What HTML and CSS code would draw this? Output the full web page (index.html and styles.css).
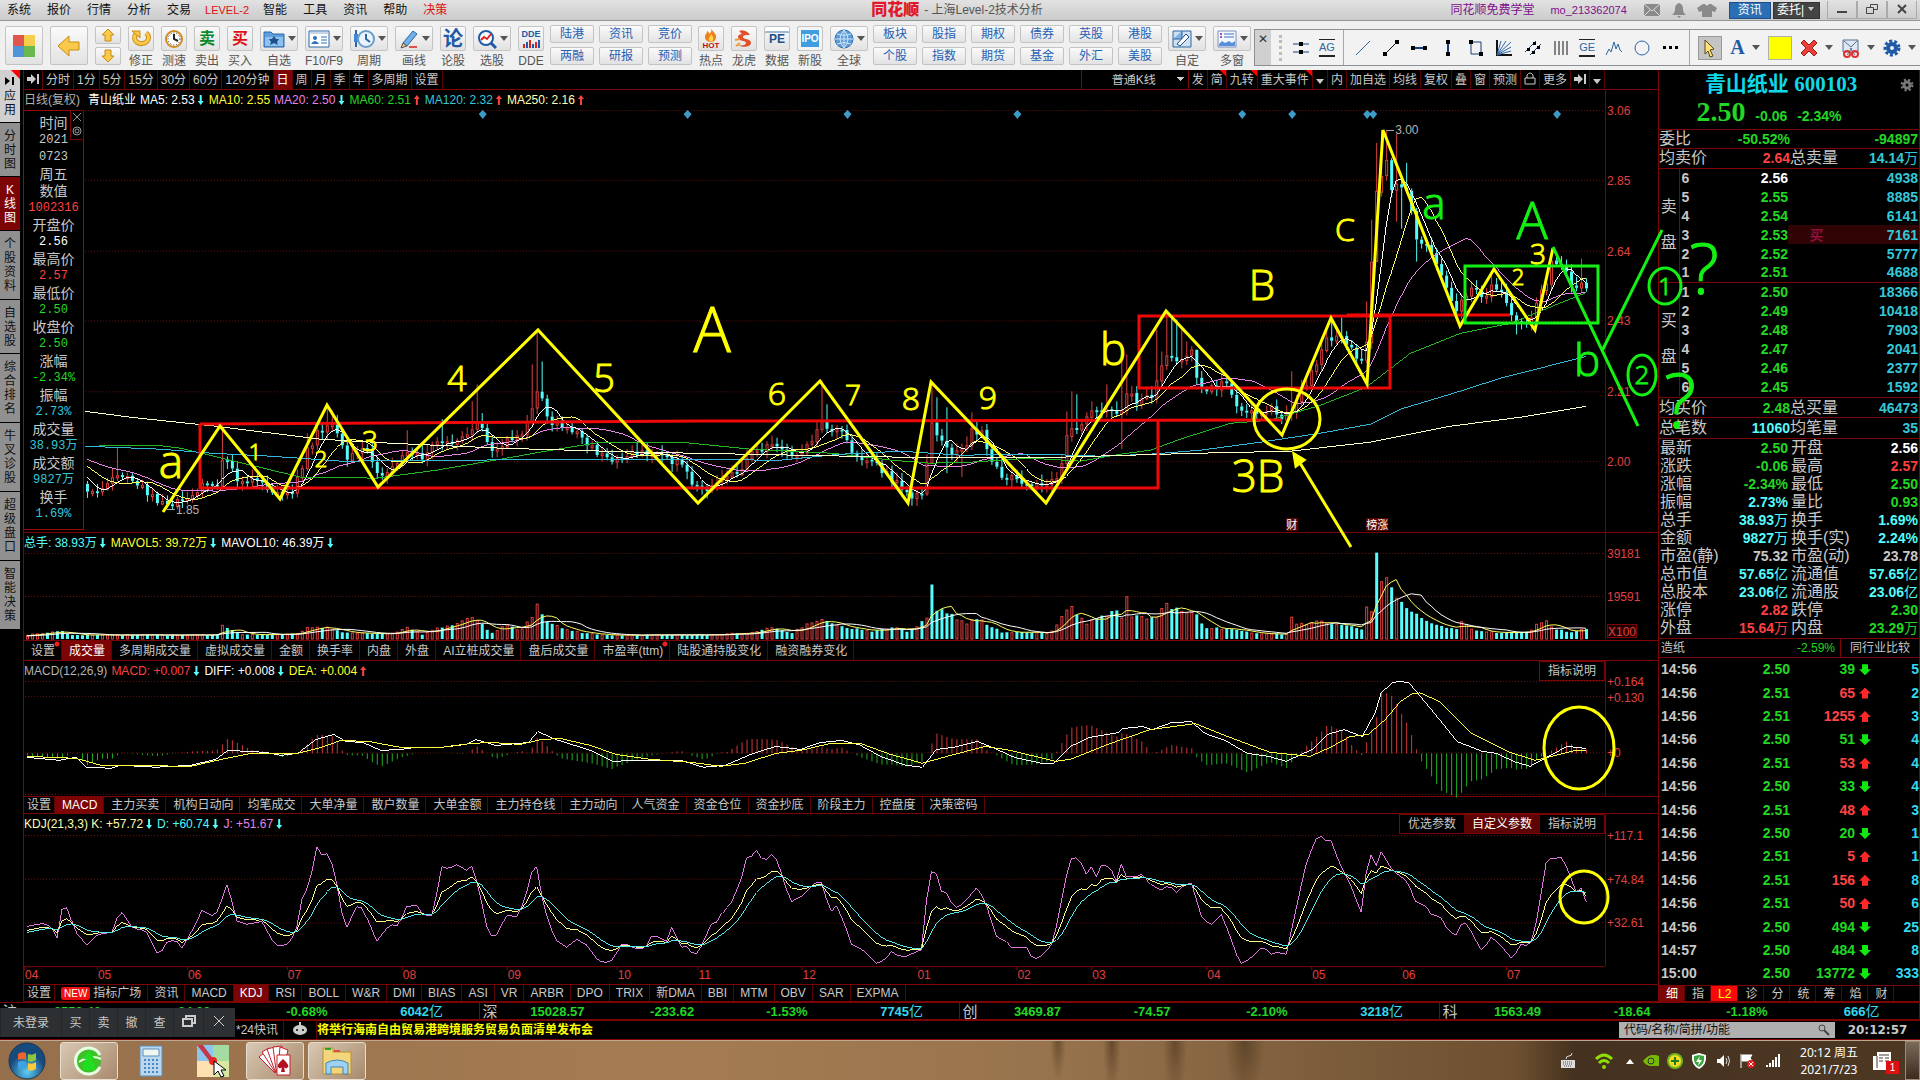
FILE: index.html
```html
<!DOCTYPE html>
<html lang="zh-CN">
<head>
    <meta charset="UTF-8">
    <meta name="viewport" content="width=device-width, initial-scale=1.0">
    <title>同花顺 - 上海Level-2技术分析</title>
    <link rel="stylesheet" href="styles.css">
</head>
<body>

    <!-- Barra de título -->
    <header class="titlebar">
        <nav class="menu">
            <a href="#">系统</a><a href="#">报价</a><a href="#">行情</a><a href="#">分析</a><a href="#">交易</a><a href="#" class="level2">LEVEL-2</a><a href="#">智能</a><a href="#">工具</a><a href="#">资讯</a><a href="#">帮助</a><a href="#" class="hot">决策</a>
        </nav>
        <div class="app-title"><b>同花顺</b><span>- 上海Level-2技术分析</span></div>
        <div class="title-right">
            <a href="#">同花顺免费学堂</a>
            <a href="#" class="account">mo_213362074</a>
            <svg width="18" height="14" viewBox="0 0 18 14"><path d="M1 1h16v12H1z" fill="#8a8a8a"/><path d="M1 1l8 7 8-7M1 13l6-6M17 13l-6-6" stroke="#ddd" fill="none"/></svg>
            <svg width="16" height="16" viewBox="0 0 16 16"><path d="M8 1c3 1 4 3 4 6 0 3 1 4 3 6H1c2-2 3-3 3-6 0-3 1-5 4-6zM6 14h4l-2 2z" fill="#8a8a8a"/></svg>
            <svg width="20" height="16" viewBox="0 0 20 16"><path d="M6 2h2c1 2 3 2 4 0h2l6 4-2 4-3-1v6H5V9l-3 1-2-4z" fill="#8a8a8a"/></svg>
            <button class="tbtn blue">资讯</button>
            <button class="tbtn dark">委托|<i class="caret light"></i></button>
            <div class="winbtns">
                <button aria-label="最小化"><svg width="12" height="10"><path d="M1 7h10v2H1z" fill="#444"/></svg></button>
                <button aria-label="还原"><svg width="12" height="10"><path d="M4.5 3V.5h7v5H8M.5 3.5h7v6h-7z" fill="none" stroke="#444"/></svg></button>
                <button aria-label="关闭"><svg width="12" height="10"><path d="M2 1l8 8M10 1l-8 8" stroke="#444" stroke-width="2"/></svg></button>
            </div>
        </div>
    </header>

    <!-- Barra de herramientas -->
    <div class="toolbar">
        <button class="big" aria-label="主页"><svg width="24" height="24" viewBox="0 0 24 24"><path d="M1 1h11v11H1z" fill="#e0554d"/><path d="M12 1h11v11H12z" fill="#f3cf4b"/><path d="M1 12h11v11H1z" fill="#4f93d8"/><path d="M12 12h11v11H12z" fill="#6ab94f"/></svg></button>
        <button class="big" aria-label="返回"><svg width="24" height="22" viewBox="0 0 24 22"><path d="M1 11L12 1v6h10v8H12v6z" fill="#fbc94a" stroke="#c98a17"/></svg></button>
        <div class="updown">
            <button aria-label="上"><svg width="14" height="14" viewBox="0 0 14 14"><path d="M7 1l6 6h-3v6H4V7H1z" fill="#fbc94a" stroke="#c98a17"/></svg></button>
            <button aria-label="下"><svg width="14" height="14" viewBox="0 0 14 14"><path d="M7 13l6-6h-3V1H4v6H1z" fill="#fbc94a" stroke="#c98a17"/></svg></button>
        </div>
        <button class="tool"><span><svg width="22" height="20" viewBox="0 0 22 20"><path d="M6 5a7 6 0 1 0 10-1" fill="none" stroke="#c98a17" stroke-width="5"/><path d="M6 5a7 6 0 1 0 10-1" fill="none" stroke="#fbc94a" stroke-width="3"/><path d="M2 2h8v7z" fill="#fbc94a" stroke="#c98a17"/></svg></span>修正</button>
        <button class="tool"><span><svg width="20" height="20" viewBox="0 0 20 20"><circle cx="10" cy="10" r="8" fill="#fff" stroke="#d08a20" stroke-width="2"/><circle cx="10" cy="10" r="6" fill="none" stroke="#222" stroke-dasharray="1 2"/><path d="M10 5v5l4 2" stroke="#222" stroke-width="2" fill="none"/></svg></span>测速</button>
        <button class="tool"><span class="sell">卖</span>卖出</button>
        <button class="tool"><span class="buy">买</span>买入</button>
        <button class="tool wide"><span><svg width="22" height="18" viewBox="0 0 22 18"><path d="M1 2h7l2 2h11v13H1z" fill="#5e9fdd" stroke="#2c66a5"/><path d="M2 7h18v9H2z" fill="#8ec1ee"/><path d="M11 6l2 3h3l-2 3 1 3-4-2-4 2 1-3-2-3h3z" fill="#1e4f8c"/></svg><i class="caret"></i></span>自选</button>
        <button class="tool wide"><span><svg width="22" height="18" viewBox="0 0 22 18"><path d="M1 1h20v16H1z" fill="#fff" stroke="#2c66a5"/><path d="M2 2h18v2H2z" fill="#c6d6e8"/><circle cx="7" cy="8" r="2" fill="#2b71bd"/><path d="M3 14q4-6 8 0z" fill="#2b71bd"/><path d="M13 7h6M13 10h6M13 13h6" stroke="#2b71bd"/></svg><i class="caret"></i></span>F10/F9</button>
        <button class="tool wide"><span><svg width="22" height="20" viewBox="0 0 22 20"><path d="M3 1v4M3 13v5" stroke="#2c66a5" stroke-width="2"/><path d="M1 5h4v8H1z" fill="#3f86d0"/><circle cx="13" cy="10" r="8" fill="#e9f3fc" stroke="#6a9ccb" stroke-width="2"/><path d="M13 5v5l4 3" stroke="#2c66a5" stroke-width="2" fill="none"/></svg><i class="caret"></i></span>周期</button>
        <button class="tool wide"><span><svg width="20" height="20" viewBox="0 0 20 20"><path d="M4 14L14 2l4 3L8 17z" fill="#6fb0e6" stroke="#2c66a5"/><path d="M4 14l4 3-6 2z" fill="#f1c27a" stroke="#555"/><path d="M10 18h8" stroke="#e05050" stroke-width="2"/></svg><i class="caret"></i></span>画线</button>
        <button class="tool"><span class="lun">论</span>论股</button>
        <button class="tool wide"><span><svg width="20" height="20" viewBox="0 0 20 20"><circle cx="9" cy="9" r="7" fill="#fff" stroke="#1f5aa8" stroke-width="2"/><path d="M14 14l5 5" stroke="#1f5aa8" stroke-width="3"/><path d="M4 11l3-3 3 2 4-5" stroke="#e02020" stroke-width="2" fill="none"/></svg><i class="caret"></i></span>选股</button>
        <button class="tool"><span class="dde">DDE<svg width="18" height="9" viewBox="0 0 18 9"><path d="M1 5h2v4H1zM7 1h2v8H7zM13 3h2v6h-2z" fill="#e02020"/><path d="M4 3h2v6H4zM10 5h2v4h-2zM16 1h2v8h-2z" fill="#1f5aa8"/></svg></span>DDE</button>
        <div class="links">
            <button>陆港</button><button>资讯</button><button>竞价</button>
            <button>两融</button><button>研报</button><button>预测</button>
        </div>
        <button class="tool"><span class="hotico"><svg width="16" height="14" viewBox="0 0 16 14"><path d="M8 0c1 4 6 5 5 10-1 3-3 4-5 4s-6-1-6-5c0-3 2-3 2-6 2 1 2 2 2 3 2-1 3-3 2-6z" fill="#f0801c"/><path d="M8 6c1 2 3 3 2 6-1 2-4 2-4 0-1-3 2-3 2-6z" fill="#ffd84a"/></svg>HOT</span>热点</button>
        <button class="tool"><span><svg width="20" height="20" viewBox="0 0 20 20"><path d="M5 2c5-2 9 1 11 4-4 0-7 0-7 2 0 3 8 1 8 6 0 4-9 5-13 2 4 1 8 0 8-2 0-3-8-1-8-6 0-2 2-3 4-3z" fill="#e0502a"/><path d="M1 11l5-1M2 17l4-3" stroke="#f09a3a" stroke-width="2"/></svg></span>龙虎</button>
        <button class="tool"><span class="pe">PE</span>数据</button>
        <button class="tool"><span class="ipo">IPO</span>新股</button>
        <button class="tool wide"><span><svg width="20" height="20" viewBox="0 0 20 20"><circle cx="10" cy="10" r="9" fill="#5b9bd8" stroke="#2f6fb0"/><path d="M1 10h18M10 1v18M3 5q7 3 14 0M3 15q7-3 14 0M10 1q-8 9 0 18q8-9 0-18" fill="none" stroke="#cfe4f7"/></svg><i class="caret"></i></span>全球</button>
        <div class="links six">
            <button>板块</button><button>股指</button><button>期权</button><button>债券</button><button>英股</button><button>港股</button>
            <button>个股</button><button>指数</button><button>期货</button><button>基金</button><button>外汇</button><button>美股</button>
        </div>
        <button class="tool wide"><span><svg width="20" height="20" viewBox="0 0 20 20"><path d="M1 2h18v16H1z" fill="#cfe0f2" stroke="#2c66a5"/><path d="M1 10h9V2" fill="#7fb2e3" stroke="#2c66a5"/><path d="M5 15L14 5l3 3-9 9z" fill="#fff" stroke="#1e4f8c"/></svg><i class="caret"></i></span>自定</button>
        <button class="tool wide"><span><svg width="20" height="18" viewBox="0 0 20 18"><path d="M1 1h18v16H1z" fill="#f4f8fd" stroke="#7a8fc0"/><path d="M3 4h2M3 7h2" stroke="#a050c0" stroke-width="2"/><path d="M7 4h10M7 7h10" stroke="#3b6fc0"/><path d="M2 14l3-3 3 2 4-2 3 2 3-2v5H2z" fill="#5a8fd8"/></svg><i class="caret"></i></span>多窗</button>

        <!-- Barra flotante de dibujo -->
        <div class="drawbar">
            <button class="closer" aria-label="关闭">✕</button>
            <i class="grip"></i>
            <button aria-label="水平线"><svg width="20" height="20" viewBox="0 0 20 20"><path d="M2 6h16M2 14h16" stroke="#16407c"/><path d="M8 4h4v4H8zM8 12h4v4H8z"/></svg></button>
            <button aria-label="文字线" class="ag">AG</button>
            <i class="vsep"></i>
            <button aria-label="直线"><svg width="20" height="20" viewBox="0 0 20 20"><path d="M3 17L17 3" stroke="#2c66a5"/></svg></button>
            <button aria-label="线段"><svg width="20" height="20" viewBox="0 0 20 20"><path d="M4 16L16 4" stroke="#111"/><path d="M2 14h4v4H2zM14 2h4v4h-4z"/></svg></button>
            <button aria-label="水平线段"><svg width="20" height="20" viewBox="0 0 20 20"><path d="M3 10h14" stroke="#16407c" stroke-width="2"/><path d="M2 8h4v4H2zM14 8h4v4h-4z"/></svg></button>
            <button aria-label="垂直线段"><svg width="20" height="20" viewBox="0 0 20 20"><path d="M10 3v14" stroke="#16407c" stroke-width="2"/><path d="M8 2h4v4H8zM8 14h4v4H8z"/></svg></button>
            <button aria-label="矩形"><svg width="20" height="20" viewBox="0 0 20 20"><path d="M5 4h10v12H5z" fill="none" stroke="#16407c"/><path d="M3 2h4v4H3zM13 14h4v4h-4z"/></svg></button>
            <button aria-label="扇形"><svg width="20" height="20" viewBox="0 0 20 20"><path d="M3 2v15h15" fill="none" stroke="#111" stroke-width="2"/><path d="M3 17L7 3M3 17L12 3M3 17L17 4M3 17l14-8M3 17l14-4" stroke="#2c66a5"/></svg></button>
            <button aria-label="平行线"><svg width="20" height="20" viewBox="0 0 20 20"><path d="M2 14L13 3M7 17L18 6" stroke="#16407c"/><path d="M4 10h3v3H4zM10 4h3v3h-3zM9 13h3v3H9zM14 8h3v3h-3z"/></svg></button>
            <button aria-label="周期线"><svg width="20" height="20" viewBox="0 0 20 20"><path d="M4 3v14M8 3v14M12 3v14M16 3v14" stroke="#111" stroke-width="1"/></svg></button>
            <button aria-label="黄金分割" class="ag">GE</button>
            <button aria-label="波浪"><svg width="20" height="20" viewBox="0 0 20 20"><path d="M2 17l3-6 2 3 3-10 2 7 2-5 2 6 2 2" fill="none" stroke="#2c66a5"/></svg></button>
            <button aria-label="圆"><svg width="20" height="20" viewBox="0 0 20 20"><circle cx="10" cy="10" r="7" fill="none" stroke="#2c66a5"/></svg></button>
            <button aria-label="更多"><svg width="20" height="20" viewBox="0 0 20 20"><path d="M3 8h3v3H3zM9 8h3v3H9zM15 8h3v3h-3z"/></svg></button>
            <i class="vsep"></i>
            <button aria-label="选择" class="pressed"><svg width="16" height="20" viewBox="0 0 16 20"><path d="M3 2l9 9-4 1 3 6-3 1-2-6-3 3z" fill="#ffe27a" stroke="#5a4a10"/></svg></button>
            <button aria-label="字体" class="fontbtn">A<i class="caret"></i></button>
            <button aria-label="颜色" class="swatch"></button>
            <button aria-label="删除" class="withcaret"><svg width="18" height="18" viewBox="0 0 18 18"><path d="M4 1l5 5 5-5 3 3-5 5 5 5-3 3-5-5-5 5-3-3 5-5-5-5z" fill="#e8403a" stroke="#a01a16"/></svg><i class="caret"></i></button>
            <button aria-label="截图" class="withcaret"><svg width="18" height="20" viewBox="0 0 18 20"><path d="M1 2h15v12H1z" fill="#dfe8f2" stroke="#55708f"/><path d="M2 3l7 6 6-6M5 17l5-7M13 17L8 10" fill="none" stroke="#55708f"/><circle cx="5" cy="16" r="3" fill="none" stroke="#e03030" stroke-width="2"/><circle cx="13" cy="16" r="3" fill="none" stroke="#e03030" stroke-width="2"/></svg><i class="caret"></i></button>
            <button aria-label="设置" class="withcaret"><svg width="18" height="18" viewBox="0 0 18 18"><circle cx="9" cy="9" r="7" fill="none" stroke="#1f5aa8" stroke-width="3" stroke-dasharray="3 2"/><circle cx="9" cy="9" r="4" fill="none" stroke="#1f5aa8" stroke-width="4"/></svg><i class="caret"></i></button>
        </div>
    </div>

    <!-- Zona principal -->
    <main class="workspace">
        <nav class="side">
            <button class="s2 light"><svg width="10" height="10" viewBox="0 0 10 10"><path d="M0 1l5 4-5 4zM7 1h2v8H7z"/></svg>应用</button>
            <button class="s3">分时图</button>
            <button class="s3 on">K线图</button>
            <button class="s4">个股资料</button>
            <button class="s3">自选股</button>
            <button class="s4">综合排名</button>
            <button class="s4">牛叉诊股</button>
            <button class="s4">超级盘口</button>
            <button class="s4">智能决策</button>
        </nav>

        <section class="charts">
            <div class="periods">
                <button aria-label="展开"><svg width="12" height="10" viewBox="0 0 12 10"><path d="M0 3h4V0l5 5-5 5V7H0zM10 0h2v10h-2z" fill="#ccc"/></svg></button>
                <button>分时</button><button>1分</button><button>5分</button><button>15分</button><button>30分</button><button>60分</button><button>120分钟</button><button class="on">日</button><button>周</button><button>月</button><button>季</button><button>年</button><button>多周期</button><button>设置</button>
                <div class="tools-right">
                    <select aria-label="K线类型"><option>普通K线</option></select>
                    <button class="first">发</button><button class="flag">简</button><button class="flag">九转</button><button class="flag">重大事件</button><button aria-label="更多事件"><i class="caret light"></i></button><button>内</button><button>加自选</button><button>均线</button><button>复权</button><button>叠</button><button>窗</button><button>预测</button><button aria-label="锁定"><svg width="12" height="13" viewBox="0 0 12 13"><path d="M3 6V3q3-4 6 0v3M1 6h10v6H1z" fill="none" stroke="#ccc"/></svg></button><button>更多</button><button aria-label="收起"><svg width="12" height="10" viewBox="0 0 12 10"><path d="M0 3h4V0l5 5-5 5V7H0zM10 0h2v10h-2z" fill="#ccc"/></svg></button><button aria-label="菜单"><i class="caret light"></i></button>
                </div>
            </div>
            <div class="info">
                <span class="gray">日线(复权)</span><span class="white name">青山纸业</span><span class="white">MA5: 2.53<i class="dn"></i></span><span class="yellow">MA10: 2.55</span><span class="violet">MA20: 2.50<i class="dn"></i></span><span class="green">MA60: 2.51<i class="up"></i></span><span class="cyan2">MA120: 2.32<i class="up"></i></span><span class="cream">MA250: 2.16<i class="up"></i></span>
            </div>
            <div class="pane kpane">
                <svg id="kline" viewBox="23 110 1635 423" preserveAspectRatio="none"></svg>
                <dl class="tip">
                    <dt>时间</dt><dd>2021</dd><dd>0723</dd><dt>周五</dt>
                    <dt>数值</dt><dd class="red">1002316</dd>
                    <dt>开盘价</dt><dd class="white">2.56</dd>
                    <dt>最高价</dt><dd class="red">2.57</dd>
                    <dt>最低价</dt><dd class="green">2.50</dd>
                    <dt>收盘价</dt><dd class="green">2.50</dd>
                    <dt>涨幅</dt><dd class="green">-2.34%</dd>
                    <dt>振幅</dt><dd class="cyan2">2.73%</dd>
                    <dt>成交量</dt><dd class="cyan2">38.93万</dd>
                    <dt>成交额</dt><dd class="cyan2">9827万</dd>
                    <dt>换手</dt><dd class="cyan2">1.69%</dd>
                </dl>
                <div class="tip-btns"><button aria-label="关闭"><svg width="10" height="10" viewBox="0 0 10 10"><path d="M1 1l8 8M9 1L1 9" stroke="#999"/></svg></button><button aria-label="设置"><svg width="10" height="10" viewBox="0 0 10 10"><circle cx="5" cy="5" r="4" fill="none" stroke="#999"/><circle cx="5" cy="5" r="2" fill="none" stroke="#999"/></svg></button></div>
            </div>
            <div class="pane">
                <div class="info">
                    <span class="cyan">总手: 38.93万<i class="dn"></i></span><span class="yellow">MAVOL5: 39.72万<i class="dn"></i></span><span class="white">MAVOL10: 46.39万<i class="dn"></i></span>
                </div>
                <svg id="volume" viewBox="23 554 1635 87" preserveAspectRatio="none"></svg>
            </div>
            <div class="tabs">
                <button class="dot">设置</button><button class="on">成交量</button><button>多周期成交量</button><button>虚拟成交量</button><button>金额</button><button>换手率</button><button>内盘</button><button>外盘</button><button>AI立桩成交量</button><button>盘后成交量</button><button class="dot">市盈率(ttm)</button><button>陆股通持股变化</button><button>融资融券变化</button>
            </div>
            <div class="pane">
                <div class="info">
                    <span class="gray">MACD(12,26,9)</span><span class="red">MACD: +0.007<i class="dn"></i></span><span class="white">DIFF: +0.008<i class="dn"></i></span><span class="yellow">DEA: +0.004<i class="up"></i></span>
                    <div class="pane-btns"><button>指标说明</button></div>
                </div>
                <svg id="macd" viewBox="23 681 1635 116" preserveAspectRatio="none"></svg>
            </div>
            <div class="tabs">
                <button class="set">设置</button><button class="on">MACD</button><button>主力买卖</button><button>机构日动向</button><button>均笔成交</button><button>大单净量</button><button>散户数量</button><button>大单金额</button><button>主力持仓线</button><button>主力动向</button><button>人气资金</button><button>资金仓位</button><button>资金抄底</button><button>阶段主力</button><button>控盘度</button><button>决策密码</button>
            </div>
            <div class="pane">
                <div class="info">
                    <span class="cream">KDJ(21,3,3) K: +57.72<i class="dn"></i></span><span class="cyan">D: +60.74<i class="dn"></i></span><span class="violet">J: +51.67<i class="dn"></i></span>
                    <div class="pane-btns"><button>优选参数</button><button class="on">自定义参数</button><button>指标说明</button></div>
                </div>
                <svg id="kdj" viewBox="23 834 1635 151" preserveAspectRatio="none"></svg>
            </div>
            <div class="tabs indicators">
                <button class="set">设置</button><button><em>NEW</em>指标广场</button><button>资讯</button><button>MACD</button><button class="on">KDJ</button><button>RSI</button><button>BOLL</button><button>W&amp;R</button><button>DMI</button><button>BIAS</button><button>ASI</button><button>VR</button><button>ARBR</button><button>DPO</button><button>TRIX</button><button>新DMA</button><button>BBI</button><button>MTM</button><button>OBV</button><button>SAR</button><button>EXPMA</button>
            </div>
        </section>

        <!-- Panel de cotización -->
        <aside class="quote">
            <div class="head">
                <h1>青山纸业 <span>600103</span></h1>
                <svg class="gear" width="14" height="14" viewBox="0 0 14 14"><circle cx="7" cy="7" r="5" fill="none" stroke="#777" stroke-width="3" stroke-dasharray="2 2"/><circle cx="7" cy="7" r="3" fill="none" stroke="#777" stroke-width="3"/></svg>
                <p><strong>2.50</strong> <b>-0.06</b> <b>-2.34%</b></p>
            </div>
            <table class="pairs lined">
                <tr><th>委比</th><td class="green">-50.52%</td><th></th><td class="green">-94897</td></tr>
                <tr><th>均卖价</th><td class="red">2.64</td><th>总卖量</th><td class="cyan2">14.14<small>万</small></td></tr>
            </table>
            <table class="book">
                <tr><th rowspan="6">卖盘</th><td class="lv">6</td><td class="px white">2.56</td><td></td><td>4938</td></tr>
                <tr><td class="lv">5</td><td class="px">2.55</td><td></td><td>8885</td></tr>
                <tr><td class="lv">4</td><td class="px">2.54</td><td></td><td>6141</td></tr>
                <tr><td class="lv">3</td><td class="px">2.53</td><td class="mark side-buy">买</td><td class="mark">7161</td></tr>
                <tr><td class="lv">2</td><td class="px">2.52</td><td></td><td>5777</td></tr>
                <tr><td class="lv">1</td><td class="px">2.51</td><td></td><td>4688</td></tr>
                <tr class="bid"><th rowspan="6">买盘</th><td class="lv">1</td><td class="px">2.50</td><td></td><td>18366</td></tr>
                <tr><td class="lv">2</td><td class="px">2.49</td><td></td><td>10418</td></tr>
                <tr><td class="lv">3</td><td class="px">2.48</td><td></td><td>7903</td></tr>
                <tr><td class="lv">4</td><td class="px">2.47</td><td></td><td>2041</td></tr>
                <tr><td class="lv">5</td><td class="px">2.46</td><td></td><td>2377</td></tr>
                <tr><td class="lv">6</td><td class="px">2.45</td><td></td><td>1592</td></tr>
            </table>
            <table class="pairs lined totals">
                <tr><th>均买价</th><td class="green">2.48</td><th>总买量</th><td class="cyan2">46473</td></tr>
                <tr><th>总笔数</th><td class="cyan">11060</td><th>均笔量</th><td class="cyan2">35</td></tr>
            </table>
            <table class="pairs details">
                <tr><th>最新</th><td class="green">2.50</td><th>开盘</th><td class="white">2.56</td></tr>
                <tr><th>涨跌</th><td class="green">-0.06</td><th>最高</th><td class="red">2.57</td></tr>
                <tr><th>涨幅</th><td class="green">-2.34%</td><th>最低</th><td class="green">2.50</td></tr>
                <tr><th>振幅</th><td class="cyan">2.73%</td><th>量比</th><td class="green">0.93</td></tr>
                <tr><th>总手</th><td class="cyan">38.93<small>万</small></td><th>换手</th><td class="cyan">1.69%</td></tr>
                <tr><th>金额</th><td class="cyan">9827<small>万</small></td><th>换手(实)</th><td class="cyan">2.24%</td></tr>
                <tr><th>市盈(静)</th><td>75.32</td><th>市盈(动)</th><td>23.78</td></tr>
                <tr><th>总市值</th><td class="cyan">57.65<small>亿</small></td><th>流通值</th><td class="cyan">57.65<small>亿</small></td></tr>
                <tr><th>总股本</th><td class="cyan">23.06<small>亿</small></td><th>流通股</th><td class="cyan">23.06<small>亿</small></td></tr>
                <tr><th>涨停</th><td class="red">2.82</td><th>跌停</th><td class="green">2.30</td></tr>
                <tr><th>外盘</th><td class="red">15.64<small>万</small></td><th>内盘</th><td class="green">23.29<small>万</small></td></tr>
            </table>
            <div class="industry"><span>造纸</span><span class="green">-2.59%</span><button>同行业比较</button></div>
            <table class="trades">
                <tr><td>14:56</td><td>2.50</td><td class="s">39</td><td>5</td></tr>
                <tr><td>14:56</td><td>2.51</td><td class="b">65</td><td>2</td></tr>
                <tr><td>14:56</td><td>2.51</td><td class="b">1255</td><td>3</td></tr>
                <tr><td>14:56</td><td>2.50</td><td class="s">51</td><td>4</td></tr>
                <tr><td>14:56</td><td>2.51</td><td class="b">53</td><td>4</td></tr>
                <tr><td>14:56</td><td>2.50</td><td class="s">33</td><td>4</td></tr>
                <tr><td>14:56</td><td>2.51</td><td class="b">48</td><td>3</td></tr>
                <tr><td>14:56</td><td>2.50</td><td class="s">20</td><td>1</td></tr>
                <tr><td>14:56</td><td>2.51</td><td class="b">5</td><td>1</td></tr>
                <tr><td>14:56</td><td>2.51</td><td class="b">156</td><td>8</td></tr>
                <tr><td>14:56</td><td>2.51</td><td class="b">50</td><td>6</td></tr>
                <tr><td>14:56</td><td>2.50</td><td class="s">494</td><td>25</td></tr>
                <tr><td>14:57</td><td>2.50</td><td class="s">484</td><td>8</td></tr>
                <tr><td>15:00</td><td>2.50</td><td class="s">13772</td><td>333</td></tr>
            </table>
            <div class="tabs bottom">
                <button class="on">细</button><button>指</button><button class="l2">L2</button><button>诊</button><button>分</button><button>统</button><button>筹</button><button>焰</button><button>财</button>
            </div>
        </aside>

        <!-- Anotaciones dibujadas sobre el gráfico -->
        <svg class="notes" viewBox="0 70 1920 932" preserveAspectRatio="none">
            <g class="nred">
                <path d="M200 424L700 421L1282 420M200 424V488H1158V420"/>
                <path d="M1139 316H1390V388H1139zM1347 315H1510"/>
            </g>
            <g class="nyellow">
                <path d="M163 512L220 426L280 499L327 405L378 487L538 330L698 503L820 381L908 503L931 382L1046 503L1166 311L1282 435L1331 318L1367 384L1383 130L1460 326L1494 269L1535 330L1553 248"/>
                <ellipse cx="1287" cy="419" rx="33" ry="30"/>
                <path d="M1351 547L1297 458"/>
                <path d="M1294 454l2 12 8-6z" fill="#ff0"/>
                <ellipse cx="1579" cy="748" rx="35" ry="41"/>
                <ellipse cx="1584" cy="897" rx="24" ry="26"/>
            </g>
            <g class="ngreen">
                <path d="M1465 266H1598V323H1465zM1553 247L1638 426M1602 351L1662 230"/>
                <ellipse cx="1665" cy="286" rx="16" ry="18"/>
                <ellipse cx="1642" cy="375" rx="14" ry="20"/>
            </g>
            <g class="hand y">
                <text x="171" y="478" font-size="46">a</text>
                <text x="255" y="460" font-size="22">1</text>
                <text x="321" y="467" font-size="22">2</text>
                <text x="370" y="451" font-size="28">3</text>
                <text x="457" y="391" font-size="34">4</text>
                <text x="604" y="392" font-size="38">5</text>
                <text x="777" y="405" font-size="32">6</text>
                <text x="853" y="405" font-size="28">7</text>
                <text x="911" y="410" font-size="32">8</text>
                <text x="988" y="409" font-size="32">9</text>
                <text x="712" y="352" font-size="62">A</text>
                <text x="1113" y="365" font-size="44">b</text>
                <text x="1262" y="300" font-size="42">B</text>
                <text x="1258" y="492" font-size="44">3B</text>
                <text x="1345" y="241" font-size="32">C</text>
                <text x="1518" y="285" font-size="22">2</text>
                <text x="1538" y="264" font-size="28">3</text>
            </g>
            <g class="hand g">
                <text x="1434" y="219" font-size="44">a</text>
                <text x="1532" y="239" font-size="52">A</text>
                <text x="1587" y="376" font-size="44">b</text>
                <text x="1665" y="295" font-size="24">1</text>
                <text x="1642" y="384" font-size="26">2</text>
                <text x="1704" y="294" font-size="70">?</text>
                <text x="1680" y="428" font-size="76">?</text>
            </g>
        </svg>
    </main>

    <div class="indexes">
        <div><span>沪</span><b>3550.40</b><b>-24.33</b><b>-0.68%</b><b class="cyan">6042<small>亿</small></b></div>
        <div><span>深</span><b>15028.57</b><b>-233.62</b><b>-1.53%</b><b class="cyan">7745<small>亿</small></b></div>
        <div><span>创</span><b>3469.87</b><b>-74.57</b><b>-2.10%</b><b class="cyan">3218<small>亿</small></b></div>
        <div><span>科</span><b>1563.49</b><b>-18.64</b><b>-1.18%</b><b class="cyan">666<small>亿</small></b></div>
    </div>

    <div class="ticker">
        <div class="login">
            <button>未登录</button><button>买</button><button>卖</button><button>撤</button><button>查</button>
            <button aria-label="还原"><svg width="14" height="12" viewBox="0 0 14 12"><path d="M1 4h9v7H1zM4 4V1h9v7h-3" fill="none" stroke="#ccc" stroke-width="2"/></svg></button>
            <button aria-label="关闭"><svg width="12" height="12" viewBox="0 0 12 12"><path d="M1 1l10 10M11 1L1 11" stroke="#ccc"/></svg></button>
        </div>
        <span class="feed">*24快讯</span>
        <span class="robot"><svg width="16" height="14" viewBox="0 0 16 14"><path d="M8 0v4" stroke="#ccc" stroke-width="2"/><ellipse cx="8" cy="8" rx="7" ry="5" fill="#ccc"/><circle cx="5" cy="8" r="1"/><circle cx="11" cy="8" r="1"/></svg></span>
        <a href="#" class="news">将举行海南自由贸易港跨境服务贸易负面清单发布会</a>
        <label class="search"><input type="text" aria-label="搜索" placeholder="代码/名称/简拼/功能"><svg width="12" height="12" viewBox="0 0 12 12"><circle cx="4" cy="4" r="3" fill="none" stroke="#444"/><path d="M6 6l5 5" stroke="#444" stroke-width="2"/></svg></label>
        <time>20:12:57</time>
    </div>

    <footer class="taskbar">
        <button class="start" aria-label="开始"><svg width="38" height="38" viewBox="0 0 38 38"><defs><radialGradient id="orb" cy="0.8"><stop offset="0" stop-color="#5fd0f5"/><stop offset="1" stop-color="#164a7c"/></radialGradient></defs><circle cx="19" cy="19" r="18" fill="url(#orb)" stroke="#1b3550"/><path d="M10 12q4-3 8-1v7q-4-2-8 0z" fill="#f0642c"/><path d="M20 12q4 2 8-1v7q-4 3-8 1z" fill="#8cc63f"/><path d="M10 20q4-2 8 0v7q-4-2-8 1z" fill="#3fa2e8"/><path d="M20 21q4 2 8-1v7q-4 3-8 1z" fill="#fbc93a"/></svg></button>
        <button class="app on" aria-label="浏览器"><svg width="32" height="32" viewBox="0 0 32 32"><circle cx="16" cy="16" r="12" fill="#3fc02a"/><path d="M27 10A13 13 0 1 0 27 22" fill="none" stroke="#e6ffe0" stroke-width="3"/><path d="M6 17q12-8 22-3" stroke="#e6ffe0" stroke-width="2" fill="none"/><path d="M16 6l6 8h-4q5 6 4 11H10q-1-5 4-11h-4z" fill="#1fe01f"/></svg></button>
        <button class="app" aria-label="计算器"><svg width="24" height="32" viewBox="0 0 24 32"><path d="M1 1h22v30H1z" fill="#b9d8f0" stroke="#5f8fb8"/><path d="M4 4h16v7H4z" fill="#eef8ee" stroke="#5f8fb8"/><path d="M5 15h14M5 19h14M5 23h14M5 27h14" stroke="#4a86c0" stroke-width="2" stroke-dasharray="2 2"/></svg></button>
        <button class="app" aria-label="画笔"><svg width="36" height="34" viewBox="0 0 36 34"><path d="M2 1h17v16H2z" fill="#8cc4ee"/><path d="M18 1h16v16H18z" fill="#a4dba0"/><path d="M2 17h16v16H2z" fill="#ffe0b0"/><path d="M18 17h16v16H18z" fill="#d9e8a0"/><path d="M2 1h6l11 15-3 3z" fill="#c03a4a"/><circle cx="18" cy="17" r="4" fill="#f02020"/><path d="M19 17v14l4-4 3 6 3-1-3-6h5z" fill="#fff" stroke="#000"/></svg></button>
        <button class="app on" aria-label="同花顺"><svg width="34" height="32" viewBox="0 0 34 32"><g fill="#fff" stroke="#c81e2a" stroke-width="1"><path d="M1 12l6-5 12 18-2 3z"/><path d="M4 7l7-4 9 21-3 3z"/><path d="M9 4l8-2 5 22-5 2z"/><path d="M15 2l9-1v23l-6 1z"/><path d="M22 2l8 3-5 20-5-1z"/><path d="M19 10h13v20H19z"/></g><path d="M25 14q8 7 4 9-2 1-3-1l1 5h-4l1-5q-1 2-3 1-4-2 4-9z" fill="#b01020"/></svg></button>
        <button class="app on" aria-label="资源管理器"><svg width="32" height="30" viewBox="0 0 32 30"><path d="M2 2h10v4h18v22H2z" fill="#f4d67a" stroke="#b89232"/><path d="M4 3h6" stroke="#2fa02f" stroke-width="2"/><path d="M13 5h6" stroke="#e04a3a" stroke-width="2"/><path d="M5 28V17q11-6 22 0v11h-5v-7H10v7z" fill="#9fd2f2" stroke="#3f86b8"/></svg></button>
        <div class="tray">
            <svg width="18" height="18" viewBox="0 0 18 18"><path d="M2 8h14v8H2z" fill="#ddd"/><path d="M4 10h10M4 12h10M5 14h8" stroke="#555" stroke-dasharray="1 1"/><path d="M7 7q0-3 3-3t3-3" stroke="#ddd" fill="none"/></svg>
            <svg width="20" height="18" viewBox="0 0 20 18"><path d="M2 7q8-8 16 0M5 11q5-5 10 0" fill="none" stroke="#8ee000" stroke-width="3"/><circle cx="10" cy="15" r="2" fill="#8ee000"/></svg>
            <svg width="10" height="8" viewBox="0 0 10 8"><path d="M5 2l4 5H1z" fill="#fff"/></svg>
            <svg width="16" height="12" viewBox="0 0 16 12"><path d="M0 6q7-9 16-5v10H7q-5-1-7-5z" fill="#76b900"/><circle cx="8" cy="6" r="3" fill="none" stroke="#333"/></svg>
            <svg width="16" height="16" viewBox="0 0 16 16"><circle cx="8" cy="8" r="8" fill="#6fb820"/><circle cx="8" cy="8" r="6" fill="#f5dc20"/><path d="M8 4v8M4 8h8" stroke="#1f7a1f" stroke-width="2"/></svg>
            <svg width="16" height="16" viewBox="0 0 16 16"><path d="M8 0l7 2q1 10-7 14Q0 12 1 2z" fill="#fff"/><path d="M8 2l5 1q1 8-5 11Q2 11 3 3z" fill="#3aa53a"/><path d="M9 3L5 9h3l-1 4 4-6H8z" fill="#fff"/></svg>
            <svg width="16" height="16" viewBox="0 0 16 16"><path d="M2 6h3l4-4v12l-4-4H2z" fill="#fff"/><path d="M11 5q2 3 0 6M13 3q3 5 0 10" fill="none" stroke="#ddd"/></svg>
            <svg width="18" height="16" viewBox="0 0 18 16"><path d="M2 1v14M3 2h10l-2 3 2 3H3z" fill="#fff" stroke="#fff"/><circle cx="12" cy="11" r="4" fill="#e02020"/><path d="M10 9l4 4M14 9l-4 4" stroke="#fff"/></svg>
            <svg width="16" height="14" viewBox="0 0 16 14"><path d="M1 11h2v2H1zM4 9h2v4H4zM7 6h2v7H7zM10 3h2v10h-2zM13 0h2v13h-2z" fill="#fff"/></svg>
        </div>
        <div class="clock">20:12 周五<br>2021/7/23</div>
        <div class="notice"><svg width="18" height="18" viewBox="0 0 18 18"><path d="M4 0h14v18H0V4h4z" fill="#fff"/><path d="M6 3h10M6 6h4M6 9h4M12 6h4M12 9h4M4 4v12" stroke="#4a3828" stroke-width="1"/></svg><b>1</b></div>
        <button class="desktop" aria-label="显示桌面"></button>
    </footer>

    <script src="chart.js"></script>
</body>
</html>
```

FILE: styles.css
```css
* {
    box-sizing: border-box;
}

body {
    margin: 0;
    height: 100vh;
    display: flex;
    flex-direction: column;
    overflow: hidden;
    background: #000;
    color: #c8c8c8;
    font: 12px/1 "Liberation Sans", "Noto Sans CJK SC", sans-serif;
}

button {
    font: inherit;
    color: inherit;
    background: none;
    border: 0;
    padding: 0;
    margin: 0;
    white-space: nowrap;
    cursor: pointer;
}

a {
    color: inherit;
    text-decoration: none;
}

svg {
    flex: none;
}

table {
    border-collapse: collapse;
    width: 100%;
}

td, th {
    padding: 0;
}

th {
    font-weight: normal;
}

.white { color: #fff; }
.gray { color: #b4b4b4; }
.red { color: #ff4040; }
.green { color: #22d822; }
.yellow { color: #ffff30; }
.violet { color: #e884e8; }
.cyan { color: #54fcfc; }
.cyan2 { color: #34c8d8; }
.cream { color: #ffffb4; }

.caret {
    display: inline-block;
    border: 4px solid transparent;
    border-top: 5px solid #555;
    border-bottom: 0;
}

.caret.light {
    border-top-color: #ccc;
}

/* barra de título */
.titlebar {
    height: 21px;
    flex: none;
    display: grid;
    grid-template-columns: 1fr auto 1fr;
    align-items: center;
    background: linear-gradient(#e2e2e2, #cbcbcb);
    border-bottom: 1px solid #8e9696;
    color: #111;
}

.menu {
    display: flex;
    gap: 16px;
    padding-left: 7px;
}

.menu .level2 {
    color: #e01010;
    font: 11px/12px "Liberation Sans", sans-serif;
    margin: 0 -2px;
}

.menu .hot {
    color: #e01010;
}

.app-title {
    display: flex;
    gap: 5px;
    align-items: center;
    padding-right: 6px;
    color: #555;
}

.app-title b {
    color: #e01828;
    font-size: 16px;
    font-weight: 900;
}

.title-right {
    display: flex;
    justify-content: flex-end;
    align-items: center;
    gap: 10px;
    padding-right: 3px;
    color: #80108c;
}

.tbtn {
    height: 17px;
    padding: 0 8px;
    color: #fff;
    background: #2a6fb4;
    border: 1px solid #1d5088;
}

.tbtn.blue {
    margin-left: 2px;
}

.tbtn.dark {
    margin-left: -8px;
    padding: 0 3px;
    background: #444;
    border-color: #333;
}

.tbtn .caret {
    margin: 0 2px 3px 4px;
    border-width: 4px 3px 0;
}

.account {
    margin-left: 6px;
    margin-right: 6px;
    font-size: 11px;
}

.winbtns {
    display: flex;
    margin-left: -3px;
}

.winbtns button {
    width: 30px;
    height: 18px;
    border: 1px solid #aaa;
    border-top: 0;
}

/* herramientas */
.toolbar {
    height: 49px;
    flex: none;
    display: flex;
    gap: 7px;
    align-items: flex-start;
    padding: 5px 0 0 5px;
    background: #f0f0f0;
    color: #555;
}

.big, .updown button, .tool span, .links button {
    border: 1px solid #c4c4c4;
    border-radius: 2px;
    background: linear-gradient(#fafafa, #e2e2e2);
    display: flex;
    align-items: center;
    justify-content: center;
}

.big {
    width: 38px;
    height: 39px;
    flex: none;
}

.updown {
    display: grid;
    gap: 3px;
}

.updown button {
    width: 26px;
    height: 18px;
}

.tool {
    width: 26px;
    flex: none;
    display: flex;
    flex-direction: column;
    align-items: center;
    gap: 4px;
}

.tool.wide {
    width: 38px;
}

.tool span {
    width: 100%;
    height: 25px;
}

.tool.wide span {
    gap: 3px;
}

.tool .sell, .tool .buy, .tool .lun {
    font-size: 16px;
    font-weight: bold;
    color: #0a8a2c;
}

.tool .buy { color: #e01010; }

.tool .lun {
    color: #1f5aa8;
    font-size: 20px;
}

.tool .dde, .tool .hotico {
    flex-direction: column;
    font-size: 9px;
    font-weight: bold;
    color: #1f5aa8;
}

.tool .hotico {
    color: #c01010;
    font-size: 8px;
}

.tool .pe, .tool .ipo {
    font-size: 12px;
    font-weight: bold;
    color: #1e4f8c;
    box-shadow: inset 0 4px #fff, inset 0 6px #9fb8d4;
}

.tool .ipo {
    font-size: 10px;
    color: #fff;
    background: #3f9ee0;
    box-shadow: inset 0 0 0 3px #f4f4f4;
}

.links {
    display: grid;
    grid-template-columns: repeat(3, 44px);
    gap: 4px 5px;
    margin: -1px -1px 0;
}

.links.six {
    grid-template-columns: repeat(6, 44px);
    margin-left: -2px;
}

.links button {
    height: 18px;
    color: #2460b4;
}

.drawbar {
    flex: 1;
    min-width: 0;
    height: 37px;
    margin: 3px 0 0 -4px;
    display: flex;
    align-items: center;
    justify-content: space-between;
    border: 1px solid #8a9096;
    border-right: 0;
    background: #f2f2f2;
    padding-right: 4px;
}

.drawbar button {
    height: 24px;
    min-width: 20px;
    display: flex;
    align-items: center;
    justify-content: center;
    gap: 7px;
}

.drawbar .closer {
    min-width: 16px;
    height: 35px;
    background: #d0d0d0;
    align-items: flex-start;
    padding-top: 3px;
    color: #333;
}

.grip {
    height: 26px;
    border-left: 3px dotted #bbb;
}

.vsep {
    height: 35px;
    border-left: 1px solid #a4a8ac;
}

.drawbar .ag {
    min-width: 16px;
    height: 18px;
    border: solid #222;
    border-width: 1px 0 2px;
    color: #2c66a5;
    font-size: 11px;
}

.drawbar .pressed {
    width: 24px;
    background: #c4c4c4;
    border: 1px solid #999;
}

.drawbar .fontbtn {
    color: #1f5aa8;
    font: bold 20px "Liberation Serif", serif;
}

.drawbar .swatch {
    width: 24px;
    background: #ff0;
    border: 1px solid #b0b0b0;
}

/* zona principal */
.workspace {
    flex: 1;
    min-height: 0;
    position: relative;
    display: grid;
    grid-template-columns: 23px minmax(0, 1fr) 262px;
    grid-template-rows: minmax(0, 1fr);
}

.notes {
    position: absolute;
    inset: 0;
    width: 100%;
    height: 100%;
    pointer-events: none;
    fill: none;
    stroke-width: 3;
}

.nred { stroke: #f00808; }
.nyellow { stroke: #ff0; }
.ngreen { stroke: #14f014; }

.hand {
    font-family: "Open Sans", "Liberation Sans", sans-serif;
    font-weight: 300;
    text-anchor: middle;
    stroke-width: 1;
}

.hand.y { fill: #ff0; stroke: #ff0; }
.hand.g { fill: #14f014; stroke: #14f014; }

.side {
    display: flex;
    flex-direction: column;
    gap: 1px;
    width: 20px;
}

.side button {
    width: 20px;
    padding: 0 4px;
    white-space: normal;
    word-break: break-all;
    line-height: 14px;
    background: #909090;
    color: #111;
    height: 68px;
}

.side .s2 {
    height: 52px;
    background: linear-gradient(225deg, #f00 6px, #d0d0d0 7px);
}

.side .s3 {
    height: 53px;
}

.side .on {
    background: #7c0404;
    color: #fff;
}

.charts {
    display: grid;
    grid-template-columns: minmax(0, 1fr);
    grid-template-rows: 20px 20px 423fr 108fr 20px 136fr 17px 171fr 17px;
    border-left: 1px solid #7c0404;
}

.periods, .tabs {
    display: flex;
    align-items: stretch;
    border-bottom: 1px solid #7c0404;
}

.periods button {
    padding: 0 3px;
    border-right: 1px solid #5c0404;
}

.periods button.on, .tabs button.on {
    background: #7c0404;
    color: #fff;
}

.tools-right {
    display: flex;
    margin-left: auto;
    margin-right: 53px;
    border-left: 1px solid #7c0404;
}

.tools-right select {
    appearance: none;
    width: 107px;
    padding: 0 30px;
    border: 0;
    border-right: 1px solid #7c0404;
    background: linear-gradient(45deg, transparent 50%, #ccc 50%) 95px 7px / 4px 4px no-repeat, linear-gradient(-45deg, transparent 50%, #ccc 50%) 99px 7px / 4px 4px no-repeat, #000;
    color: inherit;
    font: inherit;
}

.tools-right .flag {
    background: linear-gradient(225deg, #f00 4px, transparent 5px);
}

.info {
    height: 20px;
    display: flex;
    align-items: center;
    gap: 4px;
    white-space: nowrap;
}

.info .name {
    margin: 0 0 0 4px;
}

.dn, .up {
    display: inline-block;
    width: 7px;
    height: 10px;
    margin: 0 1px -1px 2px;
    background: #54fcfc;
    clip-path: polygon(3px 0, 5px 0, 5px 6px, 7px 6px, 4px 10px, 1px 6px, 3px 6px);
}

.up {
    background: #ff4040;
    clip-path: polygon(3px 10px, 5px 10px, 5px 4px, 7px 4px, 4px 0, 1px 4px, 3px 4px);
}

.pane {
    display: flex;
    flex-direction: column;
    min-height: 0;
    position: relative;
    border-bottom: 1px solid #7c0404;
}

.pane > svg {
    width: 100%;
    flex: 1;
    min-height: 0;
    overflow: visible;
}

.pane-btns {
    margin-left: auto;
    margin-right: 53px;
    align-self: stretch;
    display: flex;
    border: 1px solid #7c0404;
}

.pane-btns button {
    padding: 0 8px;
}

.pane-btns .on {
    background: #5c0404;
    color: #fff;
}

.tip {
    position: absolute;
    left: -1px;
    top: 0;
    width: 61px;
    margin: 0;
    padding: 4px 0 6px;
    border: 1px solid #9c0808;
    background: #000;
    text-align: center;
    line-height: 17px;
}

.tip dt {
    font-size: 14px;
}

.tip dd {
    margin: 0;
    font-family: "Liberation Mono", "Noto Sans CJK SC", monospace;
}

.tip-btns {
    position: absolute;
    left: 46px;
    top: 0;
    width: 14px;
    display: grid;
    background: #000;
    border: 1px solid #7c0404;
}

.tip-btns button {
    height: 14px;
}

.tabs button {
    padding: 0 6px 0 7px;
    border-right: 1px solid #5c0404;
}

.tabs .set {
    padding: 0 3px;
}

.tabs .dot {
    background: radial-gradient(circle at calc(100% - 4px) 3px, #f02020 2px, transparent 3px);
}

.indicators button {
    padding: 0 6px;
}

.indicators em {
    margin-right: 3px;
    padding: 1px 3px;
    border-radius: 3px;
    background: #f01010;
    color: #fff;
    font-size: 10px;
    font-style: normal;
}

/* panel de cotización */
.quote {
    display: flex;
    flex-direction: column;
    border-left: 1px solid #7c0404;
    border-right: 1px solid #7c0404;
    font-size: 14px;
}

.head {
    height: 59px;
    position: relative;
    text-align: center;
    color: #22d822;
}

.head h1 {
    margin: 0 16px 0 0;
    padding: 3px 0 0 0;
    color: #10d8e8;
    font: bold 21px/23px "Liberation Serif", "Noto Sans CJK SC", serif;
}

.head .gear {
    position: absolute;
    right: 5px;
    top: 8px;
}

.head p {
    margin: 0 40px 0 0;
    line-height: 32px;
}

.head strong {
    font: bold 28px/32px "Liberation Serif", serif;
}

.head b {
    margin-left: 6px;
}

.pairs {
    table-layout: fixed;
}

.pairs th {
    text-align: left;
    font-size: 16px;
    width: 50px;
    white-space: nowrap;
}

.pairs td {
    text-align: right;
    font-weight: bold;
    width: 80px;
}

.pairs th:nth-child(3) {
    width: 48px;
}

small {
    font-size: 14px;
    font-weight: normal;
}

.lined tr {
    height: 19px;
    line-height: 16px;
    border-top: 1px solid #7c0404;
}

.totals {
    margin-top: 1px;
}

.totals tr {
    height: 20px;
}

.pairs td:last-child, .book td:last-child {
    padding-right: 1px;
}

.details {
    border-top: 1px solid #7c0404;
    margin-bottom: 1px;
}

.details tr {
    height: 18px;
    line-height: 18px;
}

.details th {
    padding-left: 1px;
}

.details td {
    padding-right: 2px;
}

.book {
    border-top: 1px solid #7c0404;
    table-layout: fixed;
    font-weight: bold;
    text-align: right;
}

.book tr {
    height: 19px;
}

.book .bid {
    border-top: 1px solid #7c0404;
}

.book th {
    width: 20px;
    border-right: 1px solid #7c0404;
    font-size: 16px;
    line-height: 36px;
    word-break: break-all;
    text-align: center;
}

.book td {
    color: #34c8d8;
}

.book .lv {
    width: 15px;
    text-align: left;
    padding-left: 2px;
    color: #c8c8c8;
}

.book .px {
    width: 94px;
    color: #22d822;
}

.book .px.white {
    color: #fff;
}

.book .mark {
    background: #300404;
}

.book .side-buy {
    color: #90103c;
    padding-right: 30px;
}

.industry {
    display: flex;
    height: 20px;
    align-items: center;
    border: solid #7c0404;
    border-width: 1px 0;
    padding-left: 2px;
    font-size: 12px;
}

.industry .green {
    margin-left: auto;
    margin-right: 5px;
}

.industry button {
    width: 79px;
    align-self: stretch;
    border-left: 1px solid #7c0404;
}

.trades {
    flex: 1;
    display: flex;
    flex-direction: column;
    font-weight: bold;
    color: #22d822;
}

.trades tbody {
    flex: 1;
    display: grid;
    grid-auto-rows: 1fr;
}

.trades tr {
    display: grid;
    grid-template-columns: 49px 82px 83px 1fr;
    align-items: center;
    text-align: right;
}

.trades td:first-child {
    text-align: left;
    padding-left: 2px;
    color: #c8c8c8;
}

.trades td:last-child {
    color: #34d8f0;
}

.trades .b { color: #ff4444; }

.trades .s::after, .trades .b::after {
    content: "";
    display: inline-block;
    width: 12px;
    height: 11px;
    margin: 0 2px -1px 4px;
    background: #10e810;
    clip-path: polygon(3px 0, 9px 0, 9px 5px, 12px 5px, 6px 11px, 0 5px, 3px 5px);
}

.trades .b::after {
    background: #ff2828;
    clip-path: polygon(3px 11px, 9px 11px, 9px 6px, 12px 6px, 6px 0, 0 6px, 3px 6px);
}

.bottom {
    height: 17px;
    border-top: 1px solid #7c0404;
    font-size: 12px;
}

.bottom .l2 {
    background: #f80808;
    color: #ff0;
}

/* índices y noticias */
.indexes {
    height: 19px;
    flex: none;
    display: grid;
    grid-template-columns: repeat(4, 1fr);
    border: solid #7c0404;
    border-width: 1px 0 2px;
    font-size: 13px;
}

.indexes div {
    display: grid;
    grid-template-columns: 20px repeat(4, 1fr);
    align-items: center;
    text-align: center;
    border-right: 1px solid #7c0404;
    color: #22d822;
}

.indexes span {
    color: #c8c8c8;
    font-size: 15px;
}

.indexes .cyan {
    color: #34d8f0;
}

.ticker {
    height: 19px;
    flex: none;
    position: relative;
    display: flex;
    align-items: stretch;
    line-height: 18px;
    padding-left: 236px;
    border-bottom: 1px solid #7c0404;
}

.login {
    position: absolute;
    left: 0;
    bottom: 2px;
    width: 235px;
    height: 29px;
    display: flex;
    align-items: center;
    background: #2c3033;
}

.login button {
    width: 28px;
    height: 29px;
    border-left: 1px solid #24282a;
}

.login button:first-child {
    width: 61px;
}

.login button:nth-last-child(-n+2) {
    width: 30px;
}

.feed {
    width: 48px;
    border-right: 1px solid #5c0404;
}

.robot {
    width: 33px;
    text-align: center;
    line-height: 22px;
    border-right: 1px solid #5c0404;
}

.news {
    flex: 1;
    color: #ff0;
    font-weight: bold;
}

.search {
    width: 216px;
    margin: 1px 0;
    display: flex;
    align-items: center;
    padding-right: 5px;
    background: #b0b0b0;
}

.search input {
    flex: 1;
    min-width: 0;
    padding: 0 5px;
    border: 0;
    background: none;
    font: inherit;
}

.search input::placeholder {
    color: #111;
}

.ticker time {
    width: 85px;
    text-align: center;
    font: bold 12px/18px "DejaVu Sans", sans-serif;
}

/* barra de tareas */
.taskbar {
    height: 40px;
    flex: none;
    display: flex;
    align-items: center;
    padding-left: 8px;
    gap: 4px;
    background:
        radial-gradient(ellipse 8px 40px at 1058px 0, #6b5030, transparent),
        radial-gradient(ellipse 9px 50px at 1112px 0, #65492c, transparent),
        radial-gradient(ellipse 12px 60px at 1175px 0, #65492c, transparent),
        radial-gradient(ellipse 20px 60px at 1245px 0, #5e4528, transparent),
        linear-gradient(90deg, #96704c 0, #a57c52 35%, #97734d 55%, #7a5b3a 70%, #6e5030 79%, #44311f 82%, #4d3823 100%);
    border-top: 1px solid #c0a890;
    color: #fff;
}

.start {
    width: 38px;
    height: 38px;
    margin-right: 10px;
}

.app {
    width: 58px;
    height: 38px;
    display: flex;
    align-items: center;
    justify-content: center;
}

.app.on {
    border: 1px solid #e8dccc;
    border-radius: 3px;
    background: linear-gradient(135deg, #d8c8b4, #a88a6c);
}

.tray {
    margin-left: auto;
    display: flex;
    align-items: center;
    gap: 8px;
    padding-right: 4px;
}

.tray svg:first-child {
    margin-right: 9px;
}

.tray svg:nth-child(2) {
    margin-right: 3px;
}

.clock {
    width: 80px;
    text-align: center;
    font: 12px/17px "Noto Sans", "Noto Sans CJK SC", sans-serif;
}

.notice {
    position: relative;
    width: 28px;
    display: flex;
}

.notice b {
    position: absolute;
    right: 2px;
    bottom: -4px;
    width: 13px;
    background: #e01010;
    text-align: center;
    font: 10px/13px "Liberation Sans", sans-serif;
}

.desktop {
    width: 15px;
    height: 39px;
    border: 1px solid #9a8a7a;
    background: linear-gradient(#7a6a5a, #3c2c1e);
}
```

FILE: chart.js
```js
const NS = "http://www.w3.org/2000/svg";
const STEP = 5, FIRST = 26, COUNT = 313;
const UP = "#e04040", DOWN = "#54fcfc";

// [x, y, x, y, ...] puntos de control
const price = [-100,450,60,455,78,478,86,491,105,486,116,475,139,486,157,503,180,503,202,486,216,486,222,458,233,472,237,486,253,482,269,489,290,495,300,472,306,451,316,433,329,426,339,437,345,465,355,451,367,454,378,479,388,472,408,451,420,458,441,440,453,444,469,430,478,419,490,451,506,440,522,437,531,409,537,388,542,398,549,426,571,430,588,444,604,461,633,454,664,458,681,465,693,486,701,493,722,482,738,472,754,451,775,444,791,458,807,447,820,423,830,433,840,430,852,454,869,461,885,475,901,489,909,496,922,495,927,451,931,423,938,440,950,454,962,451,971,433,981,433,989,454,999,479,1015,479,1044,489,1056,479,1062,458,1069,426,1081,426,1093,409,1105,409,1118,419,1127,388,1136,402,1150,398,1167,353,1179,360,1191,353,1199,391,1224,384,1236,405,1248,416,1269,409,1282,421,1292,407,1303,389,1315,368,1323,343,1332,339,1340,336,1350,350,1360,364,1366,346,1372,243,1377,179,1382,171,1387,161,1392,196,1397,186,1402,193,1407,189,1412,214,1417,243,1427,243,1432,257,1442,279,1452,307,1458,314,1462,296,1477,289,1482,300,1492,282,1500,293,1510,314,1517,325,1533,318,1538,300,1547,279,1552,261,1562,264,1570,282,1580,286,1587,286];
const ma60 = [84,447,155,446,180,449,229,461,300,478,376,479,436,471,500,460,545,452,600,443,680,443,750,450,830,454,890,461,930,464,970,463,1030,459,1080,462,1120,455,1150,451,1180,440,1230,424,1270,421,1320,406,1366,388,1410,354,1460,334,1510,324,1586,293];
const ma120 = [84,447,160,450,210,454,270,457,340,462,460,461,620,460,780,461,840,455,900,452,960,456,1040,455,1100,457,1150,455,1200,451,1260,443,1320,434,1370,425,1400,410,1450,395,1500,379,1586,357];
const ma250 = [84,412,130,418,215,427,320,440,390,444,500,449,640,453,900,458,1060,458,1200,454,1290,452,1370,443,1450,427,1520,418,1586,407];
const vol = [26,4,60,8,70,4,216,4,221,13,230,9,240,4,295,5,306,11,325,12,345,6,390,5,408,12,420,4,441,12,470,20,478,18,490,6,505,14,520,8,531,22,536,33,541,23,552,14,570,8,600,4,700,4,750,6,771,11,790,6,820,21,840,12,870,8,900,12,905,6,926,20,931,58,936,30,950,24,965,14,975,22,1000,7,1050,6,1066,28,1071,30,1085,15,1105,24,1116,30,1121,22,1126,42,1131,24,1155,20,1166,37,1180,26,1195,25,1205,12,1240,8,1260,5,1286,5,1291,23,1296,14,1320,17,1345,14,1361,9,1366,33,1371,30,1376,86,1381,63,1386,62,1391,47,1396,44,1401,35,1412,27,1420,20,1440,13,1455,9,1461,17,1475,8,1500,6,1530,7,1536,14,1546,17,1555,10,1570,7,1586,10];
const diff = [26,758,58,761,75,758,85,768,110,769,120,766,155,768,190,766,215,760,227,751,265,753,280,756,297,754,315,740,333,735,345,742,362,743,380,751,400,750,415,748,440,748,465,745,475,740,495,746,528,743,537,732,555,740,590,751,612,762,640,761,680,761,703,768,725,766,750,755,775,747,800,750,820,743,840,741,860,746,880,757,905,766,922,768,936,750,953,748,977,742,992,748,1014,758,1041,764,1053,764,1070,747,1089,738,1118,733,1122,729,1142,727,1152,730,1171,723,1191,722,1205,734,1225,741,1247,754,1268,757,1286,762,1312,750,1327,735,1344,730,1362,737,1375,713,1381,693,1392,683,1399,681,1409,683,1433,712,1457,742,1482,752,1496,754,1516,763,1530,767,1545,759,1567,747,1586,749];
const dea = [26,757,75,759,100,766,190,767,230,758,250,754,297,754,320,748,340,741,368,742,400,748,440,748,470,744,490,743,520,745,540,740,560,739,590,746,615,755,650,760,690,763,720,767,745,764,775,754,800,751,830,744,860,744,890,755,922,764,950,756,985,747,1010,751,1055,762,1070,760,1110,744,1150,730,1195,724,1230,738,1270,753,1310,757,1330,748,1350,737,1368,735,1385,720,1400,702,1412,694,1420,693,1440,702,1470,733,1510,753,1535,761,1560,755,1575,751,1586,751];
const jline = [26,927,42,924,50,927,56,939,61,910,66,908,75,933,86,946,97,935,111,933,116,919,121,913,132,929,145,931,156,954,162,951,167,941,176,942,181,949,193,928,201,911,211,916,217,912,227,882,235,921,245,925,262,922,269,938,277,947,287,945,295,933,301,900,309,883,316,847,321,855,326,854,333,867,341,913,347,931,354,907,361,908,367,920,376,942,389,925,398,927,405,907,416,906,423,916,432,916,441,867,448,869,456,865,467,871,472,865,481,903,487,932,492,938,497,935,505,916,517,917,525,897,532,868,536,867,543,907,554,940,566,948,576,940,588,947,594,958,603,964,612,961,622,943,634,949,644,950,652,935,666,942,671,928,683,952,686,947,693,956,698,953,712,922,718,923,723,908,729,908,735,893,741,878,746,858,752,856,757,849,762,861,767,859,772,854,778,863,784,885,791,902,802,896,814,883,821,883,827,903,832,914,836,906,845,927,851,945,863,951,877,965,887,958,892,951,897,957,906,957,922,950,925,907,931,872,936,874,942,895,947,893,953,908,958,908,968,898,977,887,985,903,997,940,1004,940,1011,948,1027,948,1031,957,1037,960,1045,953,1053,943,1058,917,1065,880,1072,855,1080,861,1087,877,1091,867,1096,877,1102,863,1111,870,1117,884,1122,859,1126,877,1138,877,1142,874,1152,886,1162,891,1168,885,1176,893,1182,887,1191,883,1197,903,1202,920,1211,925,1221,915,1230,937,1237,958,1242,966,1248,960,1253,957,1263,947,1271,955,1277,953,1286,955,1293,923,1300,890,1307,860,1316,839,1322,836,1327,842,1331,841,1339,863,1351,887,1361,913,1366,873,1371,855,1376,866,1381,852,1392,870,1407,882,1416,902,1426,907,1431,915,1440,917,1448,931,1456,936,1461,925,1467,924,1474,938,1482,952,1491,938,1499,944,1512,960,1521,945,1528,947,1533,940,1539,907,1547,857,1554,859,1562,857,1569,873,1574,887,1577,895,1582,887,1586,902];

// máximos y mínimos puntuales de algunas velas
const highs = {116:449,221:426,231:455,306:434,326:407,331:411,406:431,441:420,471:402,476:385,531:365,536:330,541:362,821:381,826:405,931:382,936:398,946:408,971:413,1066:412,1071:392,1076:395,1091:402,1106:385,1121:360,1126:355,1156:330,1161:352,1166:311,1171:318,1176:320,1181:328,1186:342,1196:352,1291:372,1331:320,1341:318,1366:302,1371:220,1376:143,1381:130,1386:131,1396:134,1406:163,1581:259};
const lows = {931:448,946:474,961:478,1121:450,1376:262,1396:222,1401:229,1416:262,1510:334,1516:335};

function at(pts, x) {
    for (let i = 2; i < pts.length; i += 2) {
        if (x <= pts[i]) {
            const t = (x - pts[i - 2]) / (pts[i] - pts[i - 2]);
            return pts[i - 1] + t * (pts[i + 1] - pts[i - 1]);
        }
    }
    return pts[pts.length - 1];
}

function noise(n) {
    const v = Math.sin(n * 127.1 + 11.7) * 43758.5453;
    return v - Math.floor(v) - 0.5;
}

function add(svg, tag, attrs, text) {
    const el = document.createElementNS(NS, tag);
    for (const k in attrs) el.setAttribute(k, attrs[k]);
    if (text) el.textContent = text;
    svg.appendChild(el);
    return el;
}

function line(svg, points, color) {
    add(svg, "polyline", { points: points.map(p => p.join(",")).join(" "), fill: "none", stroke: color, "shape-rendering": "crispEdges" });
}

function pairs(pts) {
    const out = [];
    for (let i = 0; i < pts.length; i += 2) out.push([pts[i], pts[i + 1]]);
    return out;
}

function grid(svg, rows) {
    rows.forEach(([y, label, ly]) => {
        add(svg, "path", { d: `M24 ${y + 0.5}H1605`, stroke: "#6c1010", "stroke-dasharray": "1 2" });
        if (label) add(svg, "text", { x: 1607, y: (ly || y) + 5, fill: "#e04040", "font-size": 12 }, label);
    });
}

function frame(svg, top, bottom) {
    add(svg, "path", { d: `M1605.5 ${top}V${bottom}`, stroke: "#7c0404" });
}

function average(values, n, i) {
    let sum = 0;
    for (let k = 0; k < n; k++) sum += values(i - k);
    return sum / n;
}

const xs = Array.from({ length: COUNT }, (_, i) => FIRST + i * STEP);
const close = i => at(price, FIRST + i * STEP) + noise(i) * 8;
const volume = i => Math.max(3, at(vol, FIRST + i * STEP) * (1 + noise(i + 900) * 0.2));
const rising = i => close(i) < close(i - 1);

// velas
const k = document.getElementById("kline");
grid(k, [[110, "3.06"], [180, "2.85"], [251, "2.64"], [321, "2.43"], [392, "2.21"], [462, "2.00"]]);
frame(k, 90, 533);
xs.forEach((x, i) => {
    if (x < 85) return;
    const c = close(i), o = close(i - 1);
    const top = Math.min(c, o), h = Math.max(2, Math.abs(c - o));
    const hi = highs[x] || top - 2 - Math.abs(noise(i + 50)) * 14;
    const lo = lows[x] || top + h + 2 + Math.abs(noise(i + 300)) * 12;
    const color = rising(i) ? UP : DOWN;
    add(k, "path", { d: `M${x + 0.5} ${hi}V${top}M${x + 0.5} ${top + h}V${lo}`, stroke: color });
    add(k, "rect", rising(i)
        ? { x: x - 0.5, y: Math.round(top) + 0.5, width: 2, height: h, fill: "#000", stroke: color }
        : { x: x - 1, y: top, width: 3, height: h, fill: color });
});
const shown = xs.map((x, i) => [x, i]).filter(p => p[0] >= 83);
[[20, "#e884e8"], [10, "#ffff60"], [5, "#fff"]].forEach(([n, color]) => {
    line(k, shown.map(([x, i]) => [x, average(close, n, i).toFixed(1)]), color);
});
line(k, pairs(ma60), "#22b822");
line(k, pairs(ma120), "#34b8d8");
line(k, pairs(ma250), "#ffffc8");
[482, 687, 847, 1017, 1242, 1292, 1367, 1373, 1557].forEach(x => {
    add(k, "path", { d: `M${x} 110l4 4-4 5-4-5z`, fill: "#3c9cc8" });
});
add(k, "path", { d: "M1386 130.500h8M166 510.500h8", stroke: "#aaa" });
add(k, "text", { x: 1395, y: 134, fill: "#b4b4b4", "font-size": 12 }, "3.00");
add(k, "text", { x: 175, y: 515, fill: "#b4b4b4", "font-size": 12 }, "1.85");
[[1286, 12, "财"], [1366, 22, "榜涨"]].forEach(([x, w, t]) => {
    add(k, "rect", { x, y: 519, width: w, height: 13, fill: "#5c0404" });
    add(k, "text", { x, y: 530, fill: "#fff", "font-size": 11 }, t);
});

// volumen
const v = document.getElementById("volume");
grid(v, [[554, "39181"], [597, "19591"]]);
frame(v, 534, 640);
xs.forEach((x, i) => {
    const h = volume(i);
    const up = rising(i) && x !== 931 && x !== 1376;
    add(v, "rect", up
        ? { x: x - 0.5, y: 640 - h, width: 2, height: h, fill: "none", stroke: UP }
        : { x: x - 1, y: 640 - h, width: 3, height: h, fill: DOWN });
});
line(v, xs.map((x, i) => [x, 640 - average(volume, 5, i)]), "#ffff60");
line(v, xs.map((x, i) => [x, 640 - average(volume, 10, i)]), "#fff");
add(v, "rect", { x: 1607.5, y: 625.5, width: 29, height: 13, fill: "#200", stroke: "#7c0404" });
add(v, "text", { x: 1608, y: 637, fill: "#e04040", "font-size": 12 }, "X100");

// MACD
const m = document.getElementById("macd");
grid(m, [[681, "+0.164"], [696, "+0.130", 697], [753, "+0"], [795]]);
frame(m, 661, 797);
xs.forEach(x => {
    const h = 2 * (at(dea, x) - at(diff, x));
    add(m, "path", { d: `M${x + 0.5} 754v${-h}`, stroke: h > 0 ? "#d03838" : "#20b020" });
});
line(m, pairs(diff), "#fff");
line(m, pairs(dea), "#ffff40");

// KDJ, a partir de la línea J
const q = document.getElementById("kdj");
grid(q, [[835, "+117.1"], [879, "+74.84"], [923, "+32.61"]]);
frame(q, 815, 967);
add(q, "path", { d: "M24 967.500H1605", stroke: "#7c0404" });
let d = 934;
const K = [], D = [], J = [];
xs.forEach(x => {
    const j = at(jline, x);
    const kk = (3 * j + 4 * d) / 7;
    d = (2 * d + kk) / 3;
    J.push([x, j]);
    K.push([x, kk]);
    D.push([x, d]);
});
line(q, J, "#e078e0");
line(q, K, "#ffff90");
line(q, D, "#54e8e8");
[["04", 24], ["05", 97], ["06", 187], ["07", 287], ["08", 402], ["09", 507], ["10", 617], ["11", 698], ["12", 802], ["01", 917], ["02", 1017], ["03", 1092], ["04", 1207], ["05", 1312], ["06", 1402], ["07", 1507]].forEach(([t, x]) => {
    add(q, "path", { d: `M${x - 0.5} 967v4`, stroke: "#7c0404" });
    add(q, "text", { x, y: 980, fill: "#e04040", "font-size": 12 }, t);
});
```
